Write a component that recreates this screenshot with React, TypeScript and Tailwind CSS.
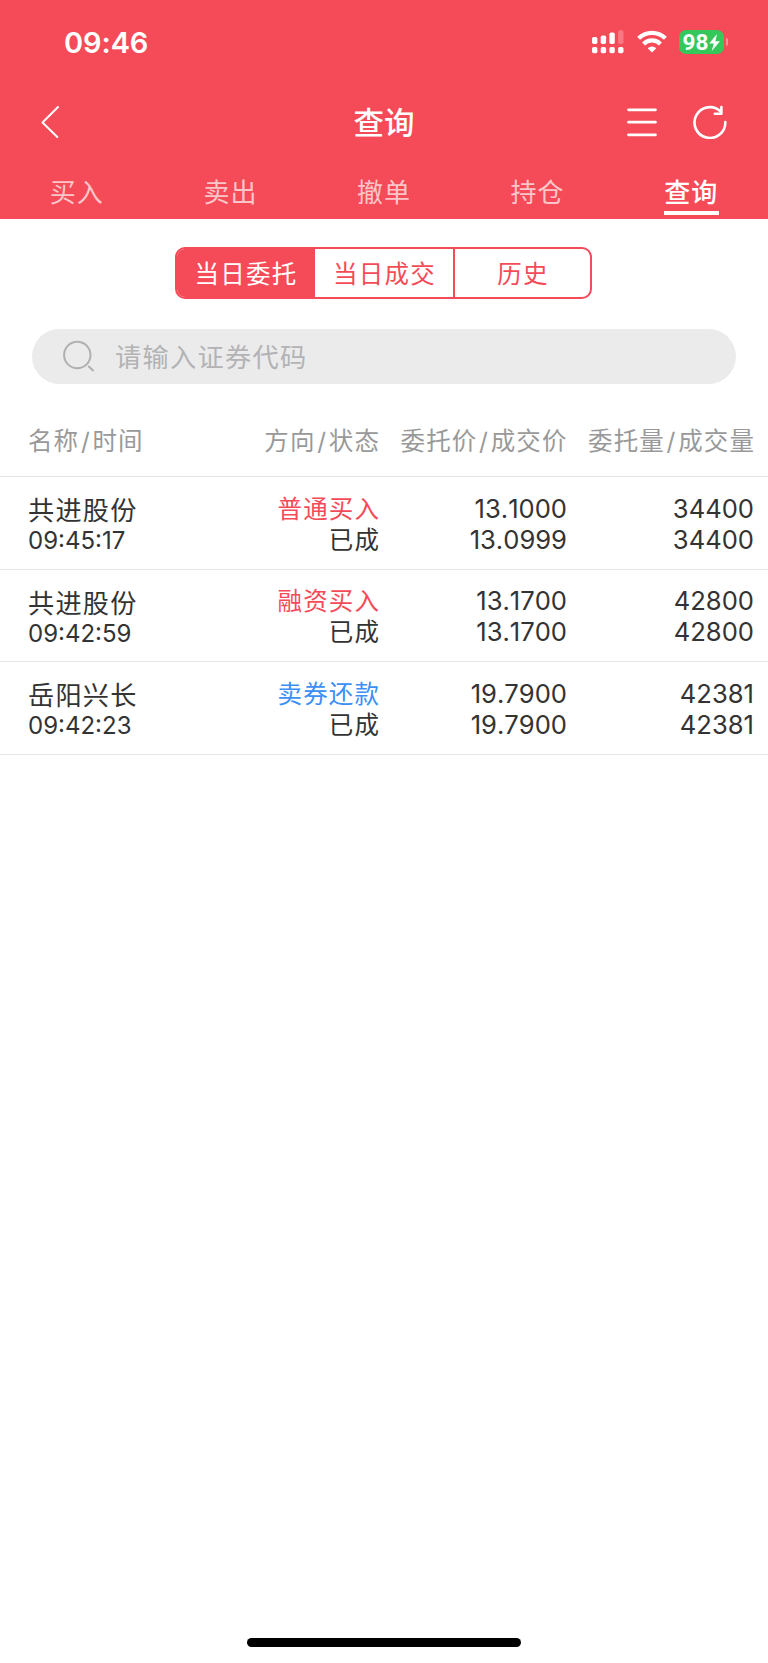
const navTabs = ['买入', '卖出', '撤单', '持仓', '查询']

const segments = ['当日委托', '当日成交', '历史']

const orders = [
  {
    name: '共进股份',
    time: '09:45:17',
    direction: '普通买入',
    directionColor: 'text-[#f54b58]',
    status: '已成',
    price: '13.1000',
    dealPrice: '13.0999',
    volume: '34400',
    dealVolume: '34400',
  },
  {
    name: '共进股份',
    time: '09:42:59',
    direction: '融资买入',
    directionColor: 'text-[#f54b58]',
    status: '已成',
    price: '13.1700',
    dealPrice: '13.1700',
    volume: '42800',
    dealVolume: '42800',
  },
  {
    name: '岳阳兴长',
    time: '09:42:23',
    direction: '卖券还款',
    directionColor: 'text-[#3b8ff5]',
    status: '已成',
    price: '19.7900',
    dealPrice: '19.7900',
    volume: '42381',
    dealVolume: '42381',
  },
]

function SignalIcon() {
  const bars = [
    { x: 0, y: 7, h: 7 },
    { x: 8.7, y: 5.5, h: 8.5 },
    { x: 17.4, y: 2.5, h: 11.5 },
  ]
  return (
    <svg width="32" height="24" viewBox="0 0 32 24" fill="#fff">
      {bars.map((b) => (
        <rect key={b.x} x={b.x} y={b.y} width="5.4" height={b.h} rx="1.7" />
      ))}
      <rect x="26.1" y="0.3" width="5.4" height="13.7" rx="1.7" opacity="0.25" />
      {[0, 8.7, 17.4, 26.1].map((x) => (
        <rect key={x} x={x} y="17" width="5.4" height="6.2" rx="1.7" />
      ))}
    </svg>
  )
}

function WifiIcon() {
  return (
    <svg width="30" height="24" viewBox="0 0 30 24" fill="none" stroke="#fff" strokeWidth="4.2">
      <path d="M1.6 8.3A19.2 19.2 0 0 1 28.4 8.3" />
      <path d="M6.6 13.9A12 12 0 0 1 23.4 13.9" />
      <path d="M15 22.6L10.7 18.2A6.2 6.2 0 0 1 19.3 18.2Z" fill="#fff" stroke="none" />
    </svg>
  )
}

function StatusBar() {
  return (
    <div className="flex h-[84px] items-center justify-between pr-[40px] pl-[64px]">
      <span className="text-[29px] leading-none font-semibold tracking-[-0.1px]">09:46</span>
      <div className="flex items-center">
        <SignalIcon />
        <div className="ml-[13px] flex">
          <WifiIcon />
        </div>
        <div className="ml-[12px] flex h-[24px] w-[45px] items-center rounded-[7px] bg-[#34c759] pl-[3.5px]">
          <span className="font-['Roboto',sans-serif] text-[22.5px] leading-none font-bold">98</span>
          <svg className="ml-[1px]" width="11" height="17" viewBox="0 0 11 17" fill="#fff">
            <path d="M8 0L0.2 9.6H4.7L2.8 17L11 7.2H6.4Z" />
          </svg>
        </div>
        <div className="ml-[2px] h-[8px] w-[2px] rounded-r-full bg-white/40" />
      </div>
    </div>
  )
}

function TitleBar() {
  return (
    <div className="grid h-[76px] grid-cols-3 items-center pr-[41px] pl-[41px]">
      <svg width="18" height="32" viewBox="0 0 18 32" fill="none" stroke="#fff" strokeWidth="2" strokeLinecap="round" strokeLinejoin="round">
        <path d="M17 1L1.5 16.5L16.3 31" />
      </svg>
      <h1 className="pt-[2px] text-center text-[30.5px] leading-none font-medium">查询</h1>
      <div className="flex items-center justify-end gap-[36px]">
        <svg width="30" height="30" viewBox="0 0 30 30" stroke="#fff" strokeWidth="2.8" strokeLinecap="round">
          <path d="M1.5 2.8H28.5M1.5 15.2H28.5M1.5 27.8H28.5" />
        </svg>
        <svg width="34" height="34" viewBox="0 0 34 34" fill="none" stroke="#fff" strokeWidth="2.6" strokeLinecap="round" strokeLinejoin="round">
          <path d="M32.3 17A15.4 15.4 0 1 1 27.6 6.5" />
          <path d="M28.4 2.1V8.7H21.8" />
        </svg>
      </div>
    </div>
  )
}

function NavTabs() {
  return (
    <nav className="grid h-[59px] grid-cols-5 text-[26px]">
      {navTabs.map((tab) =>
        tab === '查询' ? (
          <div key={tab} className="flex flex-col items-center pt-[15px] font-medium">
            <span className="leading-[36px] tracking-[1px]">{tab}</span>
            <span className="h-[4px] w-[55px] bg-white" />
          </div>
        ) : (
          <div key={tab} className="flex flex-col items-center pt-[15px] text-white/70">
            <span className="leading-[36px] tracking-[1px]">{tab}</span>
          </div>
        ),
      )}
    </nav>
  )
}

// The slash sits with a little air on both sides of it
function ColumnLabel({ first, second }: { first: string; second: string }) {
  return (
    <span>
      {first}
      <span className="mx-[1.7px]">/</span>
      {second}
    </span>
  )
}

export default function App() {
  return (
    <main className="flex h-[1663px] w-[768px] flex-col bg-white font-['Inter','Noto_Sans_CJK_SC',sans-serif] text-[#333]">
      <header className="h-[219px] bg-[#f54b58] text-white">
        <StatusBar />
        <TitleBar />
        <NavTabs />
      </header>

      {/* Segmented control */}
      <div className="mt-[28px] ml-[175px] grid h-[52px] w-[417px] grid-cols-[138px_140px_1fr] divide-x-2 divide-[#f54b58] overflow-hidden rounded-[10px] border-2 border-[#f54b58] text-[24.5px] tracking-[1.2px]">
        {segments.map((label, i) => (
          <div
            key={label}
            className={
              i === 0
                ? 'flex items-center justify-center bg-[#f54b58] pt-[2px] pl-[2px] text-white'
                : 'flex items-center justify-center pt-[2px] pl-[1px] text-[#f54b58]'
            }
          >
            {label}
          </div>
        ))}
      </div>

      {/* Search */}
      <div className="mx-[32px] mt-[29.5px] flex h-[55.5px] items-center rounded-full bg-[#ebebeb] pl-[31px] text-[#b3b3b5]">
        <svg width="32" height="32" viewBox="0 0 32 32" fill="none" stroke="#b0b0b2" strokeWidth="2">
          <circle cx="14.3" cy="15" r="13.2" />
          <path d="M25.3 26L30.6 31" />
        </svg>
        <span className="ml-[20px] pt-[2px] text-[26.2px] tracking-[1.3px]">请输入证券代码</span>
      </div>

      {/* Order table */}
      <div className="mt-[20px] grid h-[73px] grid-cols-[352px_187.5px_187.5px] items-center border-b border-[#e5e5e5] pt-[3px] pl-[28px] text-right text-[24.5px] tracking-[1.1px] whitespace-nowrap text-[#999]">
        <div className="flex justify-between">
          <ColumnLabel first="名称" second="时间" />
          <ColumnLabel first="方向" second="状态" />
        </div>
        <ColumnLabel first="委托价" second="成交价" />
        <ColumnLabel first="委托量" second="成交量" />
      </div>
      {orders.map((order) => (
        <div
          key={order.time}
          className="grid h-[92.7px] grid-cols-[175px_177px_187px_187px] border-b border-[#e5e5e5] pt-[15.5px] pl-[28px] text-right text-[25.6px] leading-[31px] [font-kerning:none]"
        >
          <div className="pt-[2.5px] text-left">
            <p className="text-[26.2px] tracking-[1.2px]">{order.name}</p>
            <p className="text-[24px] leading-[29px]">{order.time}</p>
          </div>
          <div className="pt-[1px] text-[24.5px] tracking-[1.1px]">
            <p className={order.directionColor}>{order.direction}</p>
            <p>{order.status}</p>
          </div>
          <div>
            <p>{order.price}</p>
            <p>{order.dealPrice}</p>
          </div>
          <div>
            <p>{order.volume}</p>
            <p>{order.dealVolume}</p>
          </div>
        </div>
      ))}

      {/* Home indicator */}
      <div className="mx-auto mt-auto mb-[16px] h-[9px] w-[274px] rounded-full bg-black" />
    </main>
  )
}
